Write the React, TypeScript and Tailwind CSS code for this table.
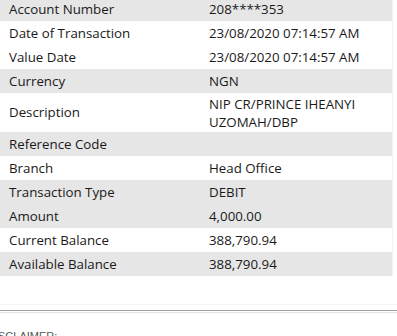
const rows: { label: string; value: string; shade: boolean; tall?: boolean }[] = [
  { label: "Account Number", value: "208****353", shade: true },
  { label: "Date of Transaction", value: "23/08/2020 07:14:57 AM", shade: false },
  { label: "Value Date", value: "23/08/2020 07:14:57 AM", shade: false },
  { label: "Currency", value: "NGN", shade: true },
  { label: "Description", value: "NIP CR/PRINCE IHEANYI UZOMAH/DBP", shade: false, tall: true },
  { label: "Reference Code", value: "", shade: true },
  { label: "Branch", value: "Head Office", shade: false },
  { label: "Transaction Type", value: "DEBIT", shade: true },
  { label: "Amount", value: "4,000.00", shade: true },
  { label: "Current Balance", value: "388,790.94", shade: false },
  { label: "Available Balance", value: "388,790.94", shade: true },
]

export default function App() {
  return (
    <div className="w-[397px] h-[336px] overflow-hidden bg-white text-[#1a1a1a] font-['Open_Sans',sans-serif] text-[13.3px]">
      <div className="-mt-[3px] w-[393px] border-r border-[#f2f2f2]">
        {rows.map((row) => (
          <div
            key={row.label}
            className={`grid grid-cols-[200px_193px] items-center ${row.tall ? "h-[39px]" : "h-6"} ${
              row.shade ? "bg-[#e6e6e6]" : "bg-white"
            }`}
          >
            <div className="pl-[9px] pt-[1px]">{row.label}</div>
            <div className={`pl-[9px] pr-2 pt-[1px] ${row.tall ? "leading-[18px]" : ""}`}>{row.value}</div>
          </div>
        ))}
      </div>
      <div className="h-[29px] border-b border-[#f3f3f3]" />
      <div className="mt-[5px] h-[3px] border-t border-[#a3a3a3] border-b border-b-[#e3e3e3]" />
      <div className="mt-[18px] -ml-[13px] text-[11px] text-[#555] uppercase leading-none font-['Liberation_Sans',sans-serif]">
        Disclaimer:
      </div>
    </div>
  )
}
